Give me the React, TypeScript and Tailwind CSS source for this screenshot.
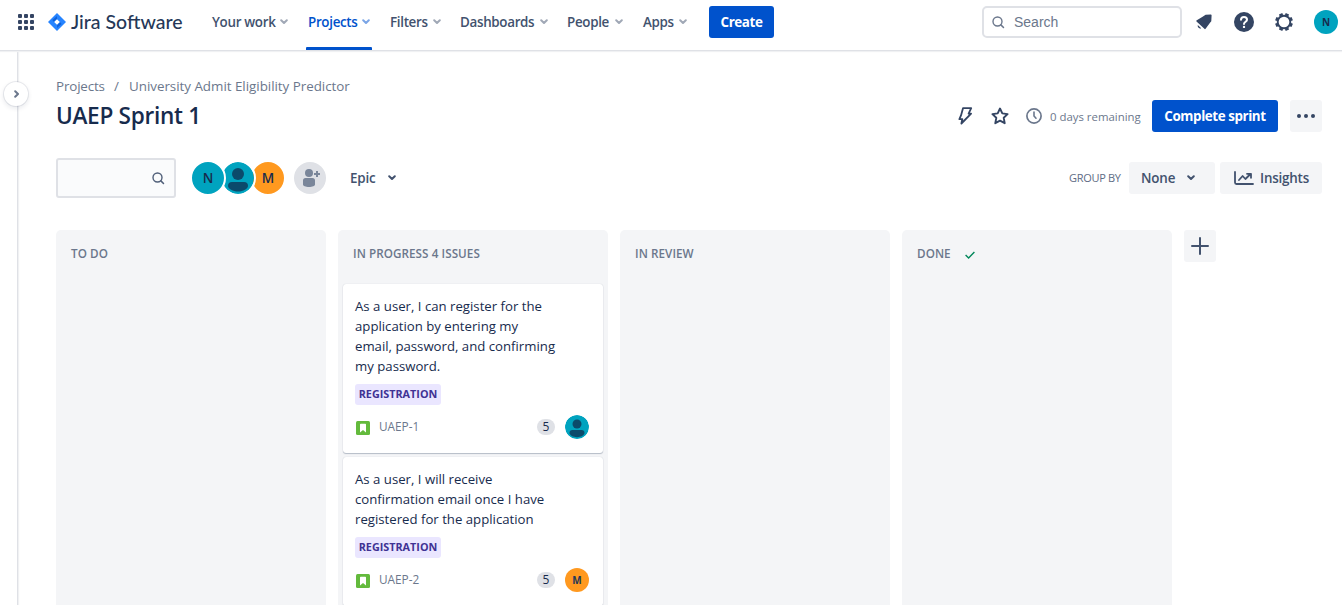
import React from "react";

type IconProps = { className?: string };

function Chevron({ className = "" }: IconProps) {
  return (
    <svg width="8" height="6" viewBox="0 0 8 6" fill="none" className={`shrink-0 ${className}`}>
      <path d="M1.2 1.2 4 4 6.8 1.2" stroke="currentColor" strokeWidth="2" strokeLinecap="round" strokeLinejoin="round" />
    </svg>
  );
}

function SearchIcon({ className = "" }: IconProps) {
  return (
    <svg width="13" height="13" viewBox="0 0 13 13" fill="none" stroke="currentColor" className={`shrink-0 ${className}`}>
      <circle cx="5.500" cy="5.500" r="4.500" strokeWidth="1.400" />
      <path d="m8.900 8.900 2.600 2.600" strokeWidth="1.500" strokeLinecap="round" />
    </svg>
  );
}

function AppSwitcher() {
  return (
    <svg width="18" height="18" viewBox="0 0 18 18" fill="#344563" className="shrink-0">
      {[1, 7, 13].map((y) => [1, 7, 13].map((x) => <rect key={`${x}-${y}`} x={x} y={y} width="4" height="4" rx="1" />))}
    </svg>
  );
}

function JiraMark() {
  return (
    <svg width="18" height="18" viewBox="0 0 18 18" className="shrink-0">
      <path d="M9 0 18 9l-9 9-9-9z" fill="#2684ff" />
      <path d="M9 3v3L6 9 4.400 7z" fill="#0f62dc" />
      <path d="M9 15v-3l3-3 1.600 2z" fill="#0f62dc" />
      <path d="m9 6.200 2.800 2.800L9 11.800 6.200 9z" fill="#fff" />
    </svg>
  );
}

function BellIcon() {
  return (
    <svg width="18" height="18" viewBox="0 0 18 18" fill="#344563">
      <path d="M15.800 1.400c.5 0 .8.3.8.8l-.3 6-1.300 1.500-4.400 6.100c-.3.5-.9.5-1.200 0L1.500 8.400c-.4-.4-.3-1 .3-1.200l6.200-3.600 2.600-1.800z" />
      <path d="M2.800 12a2.600 2.600 0 0 0 3.400 3.200z" />
    </svg>
  );
}

function HelpIcon() {
  return (
    <svg width="20" height="20" viewBox="0 0 20 20" fill="none">
      <circle cx="10" cy="10" r="10" fill="#344563" />
      <path d="M7 7.800C7 6 8.300 5 10 5s3 1.100 3 2.700C13 9.700 10 9.800 10 12" stroke="#fff" strokeWidth="2" strokeLinecap="round" />
      <circle cx="10" cy="14.900" r="1.200" fill="#fff" />
    </svg>
  );
}

function GearIcon() {
  return (
    <svg width="18" height="18" viewBox="0 0 18 18" fill="none" stroke="#344563">
      <circle cx="9" cy="9" r="6.300" strokeWidth="1.900" />
      <g strokeWidth="3.600" strokeLinejoin="round">
        {[22.5, 67.5, 112.5, 157.5, 202.5, 247.5, 292.5, 337.5].map((a) => (
          <path key={a} d="M9 .1v2.700" transform={`rotate(${a} 9 9)`} />
        ))}
      </g>
    </svg>
  );
}

function BoltIcon() {
  return (
    <svg width="16" height="18" viewBox="0 0 16 18" fill="none" stroke="#344563" strokeWidth="1.800" strokeLinejoin="round">
      <path d="M6 1.200h8.200l-2.600 5.400h2.500L4.400 16.500l.9-4.300H2.400l1.600-3.800z" />
    </svg>
  );
}

function StarIcon() {
  return (
    <svg width="18" height="18" viewBox="0 0 18 18" fill="none" stroke="#344563" strokeWidth="1.900" strokeLinejoin="round">
      <path d="m9 1.500 2.300 4.900 5.300.7-3.900 3.700 1 5.400L9 13.600l-4.700 2.600 1-5.400L1.400 7.100l5.300-.7z" />
    </svg>
  );
}

function ClockIcon() {
  return (
    <svg width="16" height="16" viewBox="0 0 16 16" fill="none" stroke="#6b778c" strokeLinecap="round">
      <circle cx="8" cy="8" r="7.100" strokeWidth="1.700" />
      <path d="M8 4v4l2 2.200" strokeWidth="1.600" />
    </svg>
  );
}

function InsightsIcon() {
  return (
    <svg width="20" height="14" viewBox="0 0 20 14" fill="none" stroke="#42526e" strokeWidth="1.800" strokeLinecap="round" strokeLinejoin="round">
      <path d="M1 1v10.500c0 .9.6 1.500 1.500 1.500H19" />
      <path d="m5 9 3.600-4 2.800 3L16.500 3M13 2.800h4v4" />
    </svg>
  );
}

function PersonAvatar({ size }: { size: number }) {
  return (
    <svg width={size} height={size} viewBox="0 0 32 32" className="shrink-0 rounded-full">
      <circle cx="16" cy="16" r="16" fill="#00a3bf" />
      <circle cx="16" cy="12" r="6" fill="#0b4a6b" />
      <path d="M6 24a4 4 0 0 1 4-4h12a4 4 0 0 1 4 4c0 2.800-5 5.600-10 5.600S6 26.800 6 24z" fill="#0b4a6b" />
    </svg>
  );
}

function AddPersonIcon() {
  return (
    <svg width="18" height="20" viewBox="0 0 18 20" fill="#7a869a">
      <circle cx="7" cy="5" r="4" />
      <path d="M1 12.500A2.500 2.500 0 0 1 3.500 10h7a2.500 2.500 0 0 1 2.500 2.500v4c0 1.500-2.700 2.500-6 2.500s-6-1-6-2.500z" />
      <path d="M14 3h2v2h2v2h-2v2h-2V7h-2V5h2z" />
    </svg>
  );
}

function StoryIcon() {
  return (
    <svg width="14" height="14" viewBox="0 0 14 14" className="mt-px ml-px shrink-0">
      <rect width="14" height="14" rx="1.500" fill="#63ba3c" />
      <path d="M4 3.500c0-.4.300-.7.700-.7h4.600c.4 0 .7.3.7.7v8L7 9l-3 2.500z" fill="#fff" />
    </svg>
  );
}

function NavItem({ label, className, active = false }: { label: string; className: string; active?: boolean }) {
  return (
    <a className={`relative flex h-[50px] shrink-0 items-center justify-between pb-[6px] text-[13.4px] font-semibold tracking-[-0.32px] whitespace-nowrap ${active ? "text-[#0052cc]" : "text-[#42526e]"} ${className}`}>
      <span>{label}</span>
      <Chevron className={active ? "text-[#7ba5e6]" : "text-[#a0a8b6]"} />
      {active && <span className="absolute -right-[2px] bottom-0 -left-[2px] h-[3px] rounded-t-[1px] bg-[#0052cc]" />}
    </a>
  );
}

function IssueCard({ lines, id, avatar }: { lines: string[]; id: string; avatar: React.ReactNode }) {
  return (
    <article className="rounded-[3px] bg-white px-3 pt-3 pb-[14px] shadow-[0_1px_1px_rgba(9,30,66,0.25),0_0_1px_rgba(9,30,66,0.2)]">
      <div className="text-[13.2px] leading-5 whitespace-nowrap text-[#172b4d]">
        {lines.map((line) => (
          <p key={line}>{line}</p>
        ))}
      </div>
      <div className="mt-2 flex h-[21px] w-[86px] items-center justify-center rounded-[3px] bg-[#eae6ff] text-[10.8px] font-bold whitespace-nowrap text-[#403294]">REGISTRATION</div>
      <div className="mt-[10px] flex h-6 items-center">
        <StoryIcon />
        <span className="ml-[9px] text-[11.8px] text-[#6b778c]">{id}</span>
        <span className="mr-[10px] ml-auto flex h-4 w-[18px] items-center justify-center rounded-full bg-[#dfe1e6] text-[12px] text-[#172b4d]">5</span>
        <div className="mr-[2px]">{avatar}</div>
      </div>
    </article>
  );
}

function Column({ title, children }: { title: React.ReactNode; children?: React.ReactNode }) {
  return (
    <section className="flex w-[270px] shrink-0 flex-col rounded-t-[5px] bg-[#f4f5f7] px-[5px]">
      <h2 className="flex h-[54px] shrink-0 items-center px-[10px] pb-[7px] text-[11.7px] font-semibold tracking-[0.06px] whitespace-nowrap text-[#6b778c]">{title}</h2>
      <div className="flex shrink-0 flex-col gap-1">{children}</div>
    </section>
  );
}

export default function App() {
  return (
    <div className="flex h-[605px] w-[1342px] flex-col overflow-hidden bg-white font-['Open_Sans','Noto_Sans',sans-serif] text-[13.4px] text-[#172b4d]">
      <header className="z-10 flex h-[50px] shrink-0 items-start bg-white pl-[17px] shadow-[0_1px_0_#dfe1e6,0_2px_1px_#f0f1f3]">
        <div className="flex h-11 w-[195px] shrink-0 items-center">
          <AppSwitcher />
          <div className="ml-[13px] flex items-center gap-[5px]">
            <JiraMark />
            <span className="font-['Lato',sans-serif] text-[19.5px] font-medium whitespace-nowrap text-[#253858]">Jira Software</span>
          </div>
        </div>
        <nav className="flex">
          <NavItem label="Your work" className="w-[76px]" />
          <NavItem label="Projects" className="ml-5 w-[62px]" active />
          <NavItem label="Filters" className="ml-5 w-[51px]" />
          <NavItem label="Dashboards" className="ml-[19px] w-[88px]" />
          <NavItem label="People" className="ml-[19px] w-[56px]" />
          <NavItem label="Apps" className="ml-5 w-[44px]" />
        </nav>
        <button className="mt-[6px] ml-[22px] h-8 w-[65px] rounded-[3px] bg-[#0052cc] font-bold tracking-[-0.4px] text-white">Create</button>
        <div className="mt-[6px] ml-auto flex h-8 w-[200px] items-center rounded-[5px] border-2 border-[#dfe1e6] pl-2 text-[#6b778c]">
          <SearchIcon />
          <span className="ml-[9px] font-['Liberation_Sans',sans-serif] text-[14px]">Search</span>
        </div>
        <div className="ml-[13px] flex h-11 w-[147px] items-center">
          <BellIcon />
          <div className="ml-[21px]"><HelpIcon /></div>
          <div className="ml-[21px]"><GearIcon /></div>
          <div className="ml-[21px] flex size-6 shrink-0 items-center justify-center rounded-full bg-[#00a3bf] text-[10px] font-bold">N</div>
        </div>
      </header>

      <div className="flex min-h-0 flex-1">
        <aside className="relative w-[18px] shrink-0 border-r border-[#dfe1e6] shadow-[1px_0_1px_#f0f1f3]">
          <button className="absolute top-[32px] left-[4px] flex size-6 items-center justify-center rounded-full bg-white pl-px text-[#6b778c] shadow-[0_0_0_1px_rgba(9,30,66,0.08),0_2px_4px_1px_rgba(9,30,66,0.08)]">
            <Chevron className="-rotate-90" />
          </button>
        </aside>

        <main className="flex min-w-0 flex-1 flex-col pl-[38px]">
          <div className="mt-[26px] flex h-5 items-center whitespace-nowrap text-[#6b778c]">
            <span className="w-[58px] tracking-[-0.15px]">Projects</span>
            <span className="w-[15px]">/</span>
            <span className="tracking-[-0.03px]">University Admit Eligibility Predictor</span>
          </div>
          <div className="mt-1 flex h-8 items-center pr-5">
            <h1 className="text-[22.6px] font-semibold tracking-[-0.3px] whitespace-nowrap">UAEP Sprint 1</h1>
            <div className="ml-auto flex items-center">
              <BoltIcon />
              <div className="ml-[18px]"><StarIcon /></div>
              <div className="ml-[17px]"><ClockIcon /></div>
              <span className="ml-2 w-[102px] pt-[2px] text-[11.4px] whitespace-nowrap text-[#6b778c]">0 days remaining</span>
              <button className="h-8 w-[126px] rounded-[3px] bg-[#0052cc] font-bold tracking-[-0.42px] whitespace-nowrap text-white">Complete sprint</button>
              <button className="ml-3 flex size-8 items-center justify-center gap-[3px] rounded-[3px] bg-[#f4f5f7]">
                <i className="size-1 rounded-full bg-[#344563]" />
                <i className="size-1 rounded-full bg-[#344563]" />
                <i className="size-1 rounded-full bg-[#344563]" />
              </button>
            </div>
          </div>

          <div className="mt-[26px] flex h-10 items-center pr-5">
            <div className="flex h-10 w-[120px] items-center justify-end rounded-[3px] border-2 border-[#dfe1e6] bg-[#fafbfc] pr-[9px] text-[#505f79]">
              <SearchIcon />
            </div>
            <div className="ml-[14px] flex">
              <div className="z-20 flex size-9 items-center justify-center rounded-full border-2 border-white bg-[#00a3bf] text-[13.5px] font-semibold">N</div>
              <div className="z-10 -ml-[6px] rounded-full border-2 border-white"><PersonAvatar size={32} /></div>
              <div className="-ml-[6px] flex size-9 items-center justify-center rounded-full border-2 border-white bg-[#ff991f] text-[13.5px] font-semibold">M</div>
            </div>
            <button className="ml-2 flex size-8 items-center justify-center rounded-full bg-[#dfe1e6] pl-[2px]"><AddPersonIcon /></button>
            <button className="ml-6 flex w-[46px] items-center justify-between font-semibold tracking-[-0.2px] text-[#42526e]">
              Epic
              <Chevron />
            </button>
            <span className="ml-auto w-[60px] text-[11px] tracking-[-0.3px] whitespace-nowrap text-[#5e6c84]">GROUP BY</span>
            <button className="flex h-8 w-[86px] items-center justify-between rounded-[3px] bg-[#f4f5f7] pr-5 pl-3 font-semibold tracking-[-0.15px] text-[#42526e]">
              None
              <Chevron />
            </button>
            <button className="ml-[5px] flex h-8 w-[102px] items-center rounded-[3px] bg-[#f4f5f7] pl-[14px] font-semibold tracking-[-0.2px] text-[#42526e]">
              <InsightsIcon />
              <span className="ml-[6px]">Insights</span>
            </button>
          </div>

          <div className="mt-8 flex min-h-0 flex-1 gap-3 overflow-hidden">
            <Column title="TO DO" />
            <Column title="IN PROGRESS 4 ISSUES">
              <IssueCard
                lines={["As a user, I can register for the", "application by entering my", "email, password, and confirming", "my password."]}
                id="UAEP-1"
                avatar={<PersonAvatar size={24} />}
              />
              <IssueCard
                lines={["As a user, I will receive", "confirmation email once I have", "registered for the application"]}
                id="UAEP-2"
                avatar={<div className="flex size-6 items-center justify-center rounded-full bg-[#ff991f] text-[10px] font-bold text-[#253858]">M</div>}
              />
            </Column>
            <Column title="IN REVIEW" />
            <Column
              title={
                <>
                  <span className="w-12">DONE</span>
                  <svg width="10" height="8" viewBox="0 0 10 8" fill="none" stroke="#00875a" strokeWidth="1.400" className="mt-[2px]">
                    <path d="m.6 4 3 3L9.400 1" />
                  </svg>
                </>
              }
            />
            <button className="flex size-8 items-center justify-center rounded-[3px] bg-[#f4f5f7]">
              <svg width="18" height="18" viewBox="0 0 18 18" stroke="#42526e" strokeWidth="2" strokeLinecap="round">
                <path d="M9 1v16M1 9h16" />
              </svg>
            </button>
          </div>
        </main>
      </div>
    </div>
  );
}
